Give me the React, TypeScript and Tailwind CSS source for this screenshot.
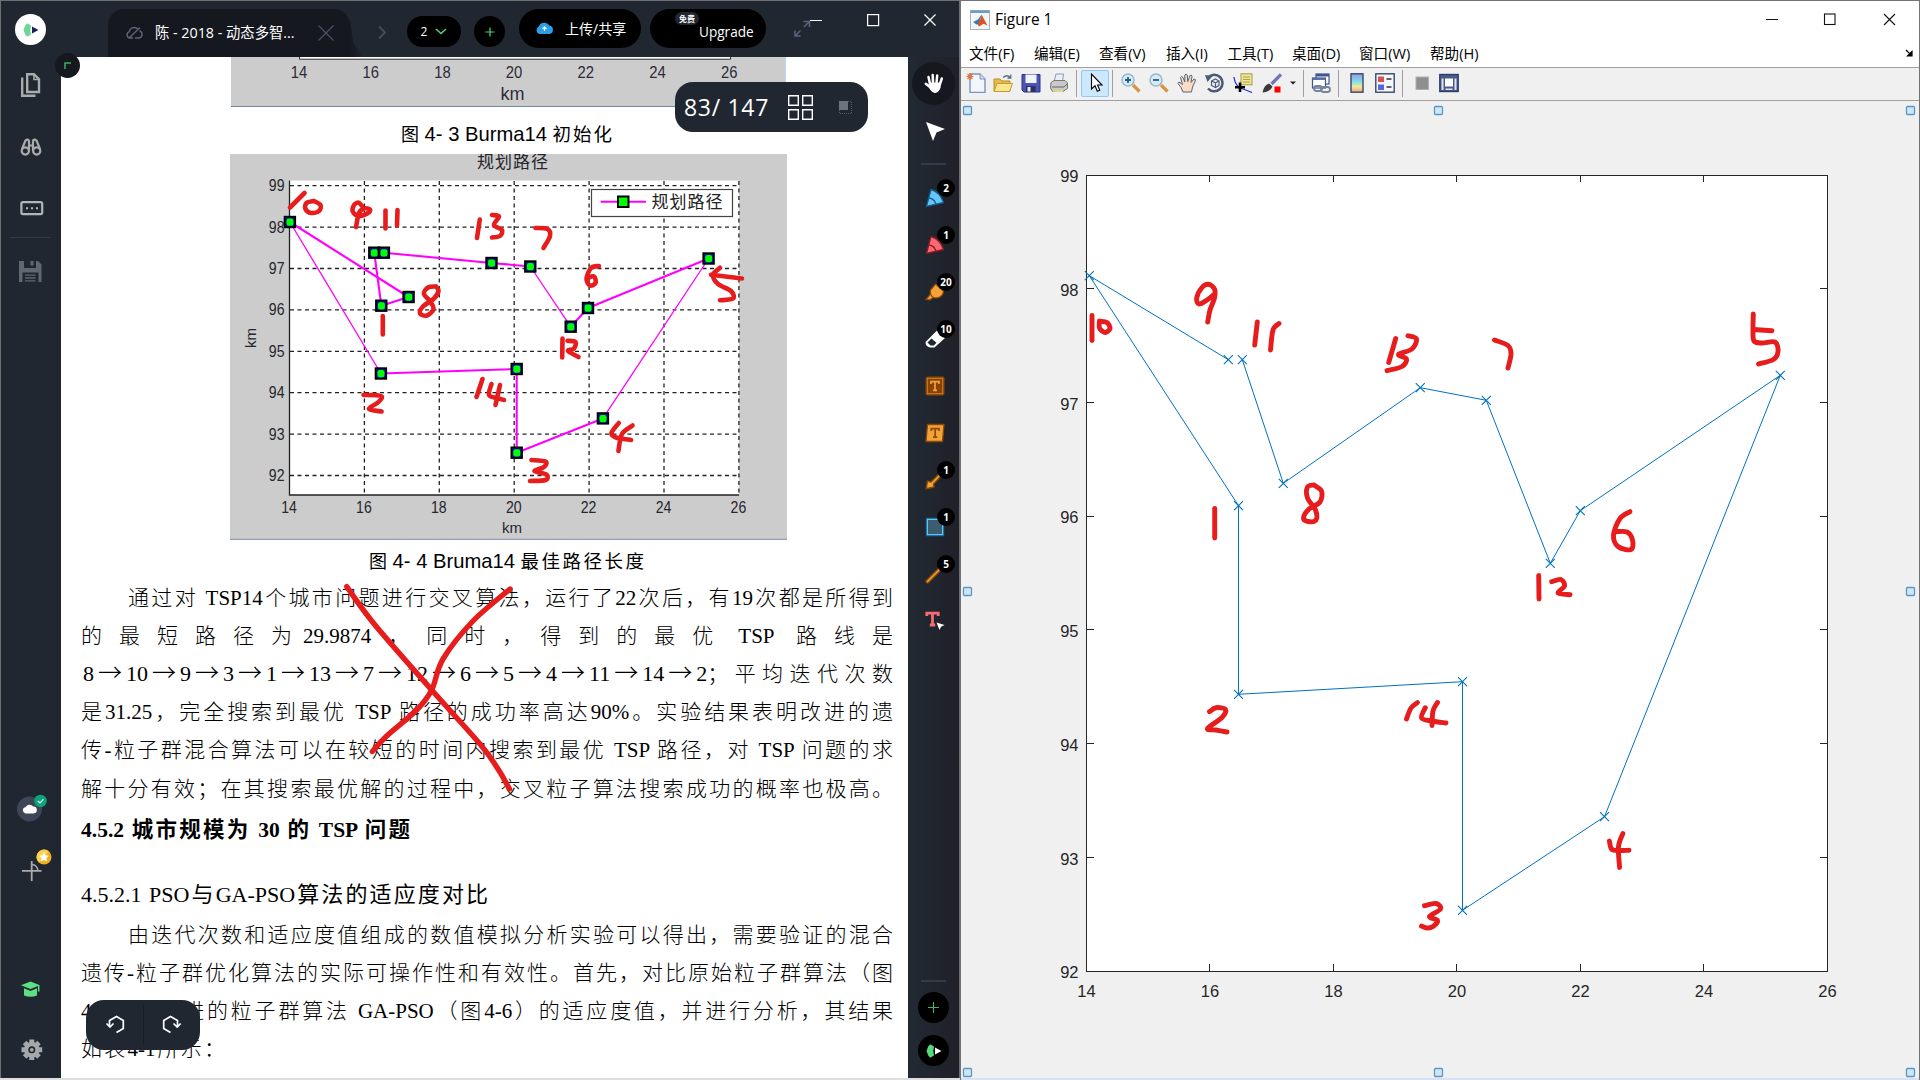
import React from "react";

const UI = "font-['Open_Sans','Noto_Sans_CJK_SC',sans-serif]";
const INK = "#e71d1d";

type P = [number, number];

/** Catmull-Rom smoothing of a pen stroke. */
function smooth(pts: P[]): string {
  if (pts.length === 2) return `M${pts[0]} L${pts[1]}`;
  let d = `M${pts[0]}`;
  for (let i = 0; i < pts.length - 1; i++) {
    const a = pts[i - 1] ?? pts[i];
    const b = pts[i];
    const c = pts[i + 1];
    const e = pts[i + 2] ?? c;
    d += ` C${b[0] + (c[0] - a[0]) / 6},${b[1] + (c[1] - a[1]) / 6} ${c[0] - (e[0] - b[0]) / 6},${c[1] - (e[1] - b[1]) / 6} ${c}`;
  }
  return d;
}

function Strokes({ list, width }: { list: P[][]; width: number }) {
  return (
    <g fill="none" stroke={INK} strokeWidth={width} strokeLinecap="round" strokeLinejoin="round">
      {list.map((s, i) => (
        <path key={i} d={smooth(s)} />
      ))}
    </g>
  );
}

const docInk: P[][] = [
  [[304.5, 193], [290, 207.5]],
  [[314, 201], [306.5, 203], [305.5, 209], [311, 213], [319, 211], [320.5, 205], [314, 201]],
  [[362, 206], [358, 202.5], [353.5, 206], [353, 212], [359, 216], [368, 213], [370, 209.5], [364, 208.5], [359, 213], [356, 227]],
  [[385.5, 210.5], [385.5, 228.5]],
  [[397.5, 210], [397, 225.5]],
  [[479.8, 219.5], [477, 238]],
  [[492, 215], [499, 216.5], [494, 225], [502, 230], [500, 236], [492, 237.5]],
  [[535.5, 228], [547.5, 229], [550, 236], [543.5, 248]],
  [[599, 266], [591, 268], [586.5, 279], [590, 285.5], [595.5, 283], [594, 276.5], [587.5, 278]],
  [[742, 278.5], [711, 274.8]],
  [[720, 267.8], [713, 275], [718, 284], [731, 291], [733, 298.5], [720, 300.3]],
  [[436, 286.5], [428, 287.5], [424, 294], [430, 301], [433.5, 309], [427, 315.5], [420, 313.5], [423, 306.5], [434, 298.5], [438.5, 291], [436, 286.5]],
  [[382.8, 316], [382.8, 334.5]],
  [[562.5, 338.5], [562.2, 357.5]],
  [[567.5, 340.8], [575.5, 342], [574, 348.5], [568, 351], [578.5, 357]],
  [[363.5, 395], [381, 396], [378.5, 402], [369, 409], [381.6, 411.5]],
  [[482.5, 379], [476.5, 397]],
  [[491.5, 384], [489, 395], [497, 398], [504, 400]],
  [[500, 385], [495.5, 405]],
  [[531.5, 460], [545.5, 461.5], [544, 467], [534.5, 471], [546.5, 474.5], [545.5, 480], [530, 481]],
  [[618.8, 423], [611.5, 433], [616, 437.5], [631, 440]],
  [[632.5, 425.5], [622, 434], [618.4, 451]],
];

const crossInk: P[][] = [
  [[346.7, 586.7], [375, 625], [431.7, 690], [480, 744], [498, 769], [509.5, 789]],
  [[510, 589], [473, 621], [443, 659], [431.7, 690], [416.7, 710], [386.7, 736], [372.3, 751.5]],
];

const figureInk: P[][] = [
  [[1092, 315.5], [1092, 340.5]],
  [[1099.5, 321], [1099.5, 328], [1105, 332.5], [1110, 328.5], [1107, 322.5], [1100.5, 321.5]],
  [[1214, 294.5], [1207, 300], [1199, 304], [1196.7, 298], [1202, 287.5], [1208.5, 284.3], [1214.5, 289], [1214.5, 298], [1210, 310], [1207.7, 322]],
  [[1257.3, 322], [1254.7, 345]],
  [[1279, 323.5], [1273, 330], [1270.5, 350]],
  [[1395.7, 338.5], [1388.7, 362.5]],
  [[1408, 335.7], [1416.5, 339], [1412, 349], [1398.5, 354.5], [1406.5, 359], [1402, 366.5], [1387, 370.7]],
  [[1494.5, 340], [1508, 345.5], [1511, 354], [1508, 368]],
  [[1753.3, 314], [1753, 330], [1754, 341], [1762, 343], [1775, 342], [1778, 351.7], [1773.3, 359.5], [1758.5, 364]],
  [[1753.3, 329.5], [1772, 330.7]],
  [[1630, 511.7], [1620, 518.5], [1613.5, 535], [1618, 546.5], [1631, 549.5], [1632.5, 540], [1627, 532], [1616, 531.7]],
  [[1538.7, 575.5], [1539, 599]],
  [[1551.7, 581.7], [1561, 579.5], [1564.5, 586], [1558, 593], [1570, 594.7]],
  [[1314, 485], [1307.5, 487], [1307.5, 498], [1315.5, 510], [1316, 520], [1308, 521.5], [1303.5, 518], [1309, 509], [1320, 502], [1321.5, 491], [1314, 485]],
  [[1214.7, 508.5], [1214.7, 538]],
  [[1209.5, 711.7], [1216, 707.7], [1225.5, 709.5], [1222, 717.5], [1207.5, 728.5], [1216, 730], [1227, 732]],
  [[1417.5, 702.5], [1411, 708], [1406.5, 719]],
  [[1425.3, 707.7], [1421.5, 718], [1432, 721], [1446, 723]],
  [[1437.5, 702.5], [1433, 711], [1432, 725.5]],
  [[1424.5, 905.7], [1436, 903.5], [1440.5, 909], [1429.4, 916.5], [1437.5, 920.5], [1433, 926.5], [1427, 928], [1421.5, 926]],
  [[1609.4, 841], [1611.5, 849], [1618, 850.5], [1629, 850.3]],
  [[1622.9, 833.5], [1618.5, 846.7], [1619.6, 867.5]],
];

function Logo({ dark }: { dark?: boolean }) {
  return (
    <svg width="16" height="14" viewBox="0 0 16 14">
      <path d="M2.2 2.5 L4.2 .3 L8 2.5 Q6.6 7 8 11.5 L4.2 13.7 L2.2 11.5 L.5 7Z" fill={dark ? "#56d97c" : "#6fd693"} />
      <path d="M9 3.5 L15.5 7 L9 10.5Z" fill={dark ? "#fff" : "#1b2350"} />
    </svg>
  );
}

function TitleBar() {
  return (
    <header className={`flex h-14 w-full shrink-0 bg-[#212730] text-white ${UI}`}>
      <div className="flex w-[107px] pl-[14px] pt-[13px]">
        <div className="flex size-[31px] items-center justify-center rounded-full bg-white">
          <Logo />
        </div>
      </div>
      <div className="flex">
        <div className="mt-2 flex h-12 w-[242px] items-center rounded-t-[16px] bg-[#16181f] pl-[18px]">
          <svg width="17" height="14" viewBox="0 0 17 14" fill="none" stroke="#5d6377" strokeWidth="1.5" strokeLinecap="round">
            <path d="M6.5 12 H4 A3.2 3.2 0 0 1 3.2 5.8 A5 5 0 0 1 11 2.4 M14 5 A3.7 3.7 0 0 1 12.5 12 H9.5 M3 12 L13.5 2" />
          </svg>
          <span className="ml-[12px] w-[141px] whitespace-nowrap text-[14.3px] leading-none">陈 - 2018 - 动态多智...</span>
          <svg className="ml-[22px]" width="16" height="16" viewBox="0 0 16 16" stroke="#4c5263" strokeWidth="1.2">
            <path d="M.5 .5 L15.5 15.5 M15.5 .5 L.5 15.5" />
          </svg>
        </div>
        <div className="mt-2 h-12 w-4 bg-linear-to-r from-[#16181f] to-[#212730] [clip-path:polygon(0_20%,0_100%,80%_100%,20%_70%)]" />
      </div>
      <svg className="ml-[11px] mt-[24px]" width="10" height="15" viewBox="0 0 10 15" fill="none" stroke="#474d5c" strokeWidth="1.8">
        <path d="M2 1.5 L8 7.5 L2 13.5" />
      </svg>
      <div className="ml-[20px] mt-[15px] flex h-[31px] w-[54px] items-center justify-center gap-2 rounded-full bg-black text-[12px]">
        2
        <svg width="12" height="7" viewBox="0 0 12 7" fill="none" stroke="#4fd27c" strokeWidth="1.6">
          <path d="M1 1 L6 5.5 L11 1" />
        </svg>
      </div>
      <div className="ml-[13px] mt-[15px] flex size-[31px] items-center justify-center rounded-full bg-black">
        <svg width="10" height="10" viewBox="0 0 10 10" stroke="#4fd27c" strokeWidth="1.2">
          <path d="M5 .5 V9.5 M.5 5 H9.5" />
        </svg>
      </div>
      <div className="ml-[14px] mt-2 flex h-[39px] w-[122px] items-center rounded-full bg-black pl-4">
        <svg width="19" height="13" viewBox="0 0 19 13">
          <path d="M4.5 12 A4 4 0 0 1 3.8 4.5 A6 6 0 0 1 14.5 3.6 A4.3 4.3 0 0 1 14.6 12Z" fill="#2d9fe8" />
          <path d="M9.5 9 V5 M7.5 6.8 L9.5 4.8 L11.5 6.8" stroke="#fff" strokeWidth="1.2" fill="none" />
        </svg>
        <span className="ml-[11px] whitespace-nowrap text-[14px]">上传/共享</span>
      </div>
      <div className="relative ml-[9px] mt-2 h-[39px] w-[116px] rounded-full bg-black">
        <span className="absolute left-[25px] top-[3px] flex h-[13px] w-6 items-center justify-center whitespace-nowrap rounded-full bg-[#212730] text-[8px] font-bold">
          免费
        </span>
        <span className="absolute left-[49px] top-[13px] text-[13.6px] leading-5">Upgrade</span>
      </div>
      <svg className="ml-[28px] mt-[13px]" width="142" height="26" viewBox="794 14 142 26" fill="none">
        <g stroke="#5d6278" strokeWidth="1.5">
          <path d="M804 27 L809.5 21.5 M803.5 21.5 H809.5 V27 M800.5 30.5 L795 36 M795 30.5 V36 H800.5" />
        </g>
        <g stroke="#fff" strokeWidth="1.2">
          <path d="M810 20.5 H822 M924.5 14.5 L935.5 25.5 M935.5 14.5 L924.5 25.5" />
          <rect x="867.6" y="14.6" width="11" height="11" />
        </g>
      </svg>
    </header>
  );
}

function LeftRail() {
  return (
    <aside className="relative flex w-[60px] shrink-0 flex-col bg-[#212730]">
      <svg width="60" height="1021" viewBox="1 57 60 1021" fill="none">
        <g stroke="#a9abae" strokeWidth="2.4">
          <path d="M27.2 74.2 H34 L39 79.2 V92 H27.2Z" />
          <path d="M34 74.5 V79.5 H39" strokeWidth="1.6" />
          <path d="M22.2 77.5 V95.8 H35.5" />
        </g>
        <g stroke="#a9abae" strokeWidth="2.2">
          <circle cx="25.3" cy="151" r="3.6" />
          <circle cx="36.7" cy="151" r="3.6" />
          <path d="M22 149 L25.5 140.5 Q28 138.5 29 141 V151 M40 149 L36.5 140.5 Q34 138.5 33 141 V151 M29 145.5 H33" />
        </g>
        <rect x="21.4" y="202.2" width="20.8" height="12" rx="1.6" stroke="#b3b5b8" strokeWidth="2.2" />
        <path d="M26 208.3 h2 M31 208.3 h2 M36 208.3 h2" stroke="#b3b5b8" strokeWidth="2" />
        <path d="M11 237.5 H51" stroke="#363c47" />
        <path d="M19 261 H24 V268 H36 V261 H38 L41.5 264.5 V282 H38.5 V272.5 H22.5 V282 H19Z M30.5 261 h3 v4.5 h-3z" fill="#62676f" />
        <path d="M25 275.2 H35.5 M25 278 H35.5 M25 280.8 H35.5" stroke="#62676f" strokeWidth="1.3" />
        <circle cx="29.5" cy="809" r="12.5" fill="#3f4557" />
        <path d="M25.5 813.5 A3.2 3.2 0 0 1 25.5 807.2 A4.6 4.6 0 0 1 33.2 806.5 A3.4 3.4 0 0 1 33.5 813.5Z" fill="#fff" />
        <circle cx="40.5" cy="801" r="6.2" fill="#0aa679" />
        <path d="M37.8 801 L40 803 L43.4 799.4" stroke="#fff" strokeWidth="1.1" />
        <path d="M31.7 861 V881 M22 870.8 H41.5" stroke="#a9abae" strokeWidth="1.8" />
        <path d="M32 864.5 Q37 865 38 870.5" stroke="#a9abae" strokeWidth="1.5" />
        <circle cx="44" cy="857" r="7.5" fill="#f0b01e" />
        <path d="M37.5 853.5 A7.5 7.5 0 0 1 49 851.5 L39 862.5 A7.5 7.5 0 0 1 37.5 853.5Z" fill="#f9d24c" />
        <path d="M44 852 l1.5 3.2 3.4.5 -2.5 2.4 .6 3.5 -3-1.7 -3 1.7 .6-3.5 -2.5-2.4 3.4-.5z" fill="#fff" />
        <path d="M30.5 981.5 L40 985.2 L30.5 989 L21 985.2Z" fill="#5de085" />
        <path d="M24 988.3 L30.5 991 L37 988.3 V995.5 Q30.5 998 24 995.5Z" fill="#5de085" />
        <path d="M38.7 985.5 V991.5" stroke="#5de085" strokeWidth="1.5" />
        <g stroke="#a5a8ab" strokeWidth="5">
          <path d="M31.8 1039.5 V1060 M21.5 1049.8 H42.2 M24.6 1042.6 L39 1057 M39 1042.6 L24.6 1057" />
        </g>
        <circle cx="31.8" cy="1049.8" r="7.8" fill="#a5a8ab" />
        <circle cx="31.8" cy="1049.8" r="2.7" stroke="#212730" strokeWidth="1.6" />
      </svg>
    </aside>
  );
}

const brown = "#8a4a06";
const amber = "#f5a13a";

function Crayon({ fill, edge }: { fill: string; edge: string }) {
  return (
    <svg width="20" height="20" viewBox="0 0 20 20" fill={fill} stroke={edge} strokeWidth="1.3" strokeLinejoin="round">
      <path d="M1.5 18.3 L6 1.5 Q15 4 18.5 14.5 Z" />
      <path d="M3.8 10 Q9.5 10.5 11 16.4" fill="none" />
    </svg>
  );
}

const tools: { badge?: string; icon: React.ReactNode }[] = [
  { badge: "2", icon: <Crayon fill="#66c5fb" edge="#12608f" /> },
  { badge: "1", icon: <Crayon fill="#fa6870" edge="#8f1c24" /> },
  {
    badge: "20",
    icon: (
      <svg width="20" height="20" viewBox="0 0 20 20" fill={amber} stroke={brown} strokeWidth="1.2">
        <path d="M1 17.5 L6 11.5 L9 15 L5 17.8Z" />
        <path d="M5.5 8 L10.5 2 L18.5 9 Q18 15.5 11 16 L8 15.5 Q4.5 12 5.5 8Z" />
      </svg>
    ),
  },
  {
    badge: "10",
    icon: (
      <svg width="20" height="20" viewBox="0 0 20 20">
        <path d="M.5 13 L12 1.5 L20 9 L9.5 18.5 H5 Q.5 17.5 .5 13Z" fill="#fff" />
        <path d="M2.5 13.5 L6.5 9.5 L11.5 13.8 L8.8 16.6 H5.5Z" fill="#212730" />
      </svg>
    ),
  },
  {
    icon: (
      <svg width="20" height="20" viewBox="0 0 20 20">
        <rect x=".5" y=".5" width="19" height="19" rx="2" fill={brown} />
        <rect x="2.4" y="2.4" width="15.2" height="15.2" fill="#8a4200" stroke="#c97a24" strokeWidth="1" />
        <path d="M6 8 V5.6 H14 V8 M10 5.6 V14.4 M8 14.4 H12" fill="none" stroke={amber} strokeWidth="1.7" />
      </svg>
    ),
  },
  {
    icon: (
      <svg width="20" height="20" viewBox="0 0 20 20">
        <path d="M2.5 1.5 H19 L17.5 18.5 H1Z" fill={amber} stroke={brown} strokeWidth="1.3" strokeLinejoin="round" />
        <path d="M6.3 8 V5.6 H14 V8 M10.2 5.6 V14.2 M8 14.2 H12.2" fill="none" stroke={brown} strokeWidth="1.7" />
      </svg>
    ),
  },
  {
    badge: "1",
    icon: (
      <svg width="20" height="20" viewBox="0 0 20 20" fill={amber} stroke={brown} strokeWidth="1.4" strokeLinejoin="round">
        <path d="M1.2 18.8 L2.5 11 L6 12 L16 2 L18 4 L8.5 14 L9 17Z" />
      </svg>
    ),
  },
  {
    badge: "1",
    icon: (
      <svg width="20" height="20" viewBox="0 0 20 20">
        <rect x=".8" y=".8" width="18.4" height="18.4" rx="1" fill="#12699c" />
        <rect x="2.4" y="2.4" width="15.2" height="15.2" fill="#3b5d6f" stroke="#6fcbfa" strokeWidth="1" />
      </svg>
    ),
  },
  {
    badge: "5",
    icon: (
      <svg width="20" height="20" viewBox="0 0 20 20" strokeLinecap="round">
        <path d="M2.5 17.5 L17 3" stroke={brown} strokeWidth="4.2" />
        <path d="M2.5 17.5 L17 3" stroke={amber} strokeWidth="1.5" />
      </svg>
    ),
  },
  {
    icon: (
      <svg width="20" height="20" viewBox="0 0 20 20">
        <path d="M1.8 5 V2.2 H13.2 V5 M7.5 2.2 V14 M4.8 14 H10.2" fill="none" stroke="#fa6b71" strokeWidth="2.8" />
        <path d="M11.5 11.5 L19.5 14 L16 15.8 L14.5 19Z" fill="#fff" />
      </svg>
    ),
  },
];

function RightRail() {
  return (
    <aside className={`flex w-[51px] shrink-0 flex-col items-center bg-linear-to-r from-[#212a34] to-[#202028] text-white ${UI}`}>
      <div className="mt-[5px] flex size-[43px] items-center justify-center rounded-full bg-[#15181f]">
        <svg width="20" height="21" viewBox="0 0 20 21" fill="none" stroke="#fff" strokeWidth="2.5" strokeLinecap="round">
          <path d="M6 11 L4.5 4 M9 10 L8.7 2 M12.5 10 L13.2 2.4 M16 11 L17.8 5.5 M6 14 L1.8 10.8" />
          <path d="M6 10 L16.5 10 L16 15 Q14.5 19.5 11 19.5 Q7.5 19.5 5 14Z" fill="#fff" strokeWidth="1" />
        </svg>
      </div>
      <svg className="ml-[2px] mt-4" width="20" height="20" viewBox="0 0 20 20">
        <path d="M1 1 L20 8 L11.5 11.5 L8 20Z" fill="#fff" />
      </svg>
      <div className="mb-[9px] mt-[22px] h-0.5 w-[25px] bg-[#343a4a]" />
      {tools.map((t, i) => (
        <div key={i} className="relative flex h-[47px] w-full items-center justify-center pl-[2px] [&>svg]:shrink-0">
          {t.icon}
          {t.badge && (
            <span className="absolute left-[29px] top-[5px] flex size-[18px] items-center justify-center rounded-full bg-black text-[10px] font-bold">
              {t.badge}
            </span>
          )}
        </div>
      ))}
      <div className="mt-auto h-0.5 w-[25px] bg-[#343a4a]" />
      <div className="mt-[10px] flex size-[31px] items-center justify-center rounded-full bg-black">
        <svg width="11" height="11" viewBox="0 0 11 11" stroke="#3fb568" strokeWidth="1.1">
          <path d="M5.5 0 V11 M0 5.5 H11" />
        </svg>
      </div>
      <div className="mb-3 mt-3 flex size-[31px] items-center justify-center rounded-full bg-black">
        <Logo dark />
      </div>
    </aside>
  );
}

const tour: P[] = [
  [289.9, 222], [408.6, 297], [381.3, 305.7], [374.3, 252.7], [383.9, 252.7], [491.5, 263], [530.3, 266.5],
  [570.7, 326.7], [588, 308], [708.6, 258.5], [602.9, 418.4], [516.7, 452.7], [516.7, 369], [380.9, 373.5],
];

/** Legs of the tour, by start index, that are drawn as hairlines. */
const thinLegs = [6, 9, 13];

function Marker({ p }: { p: P }) {
  return (
    <g>
      <rect x={p[0] - 5.3} y={p[1] - 5.3} width="10.6" height="10.6" fill="#0a12a0" stroke="#000" strokeWidth="1.8" />
      <rect x={p[0] - 3.4} y={p[1] - 3.4} width="7" height="7.2" rx="2.2" fill="#0f0" />
    </g>
  );
}

function TopChart() {
  const ticks = [14, 16, 18, 20, 22, 24, 26];
  return (
    <svg className="ml-[170px] shrink-0" width="556" height="50" viewBox="231 57 556 50" fontFamily="Liberation Sans, Arial, sans-serif">
      <rect x="231" y="57" width="553" height="49" fill="#ccc" />
      <rect x="299.5" y="57" width="431" height="2" fill="#fff" />
      <path d="M299.5 57 V59.2 H730.5 V57" stroke="#333" fill="none" />
      <path d="M231 106.5 H785" stroke="#74889b" strokeWidth="1.2" />
      <path d="M785 57 V106" stroke="#a9c3dd" strokeWidth="1.5" />
      <g fill="#2c2c38" textAnchor="middle">
        {ticks.map((t, i) => (
          <text key={t} transform={`translate(${299 + i * 71.7} 77.5) scale(.9 1)`} fontSize="16.5">{t}</text>
        ))}
        <text x="512.5" y="99.5" fontSize="18">km</text>
      </g>
    </svg>
  );
}

function PathChart() {
  const xs = [14, 16, 18, 20, 22, 24, 26];
  const ys = [99, 98, 97, 96, 95, 94, 93, 92];
  return (
    <svg className="ml-[169px] shrink-0" width="557" height="386" viewBox="230 154 557 386" fontFamily="Liberation Sans, Noto Sans CJK SC, sans-serif">
      <rect x="230" y="154" width="557" height="386" fill="#ccc" />
      <rect x="289.5" y="180.5" width="449.5" height="314.5" fill="#fff" />
      <g stroke="#222" strokeWidth="1.3" strokeDasharray="4 3.5">
        {xs.slice(1).map((t, i) => (
          <path key={t} d={`M${364.4 + i * 74.9} 181 V495`} />
        ))}
        {ys.map((t, i) => (
          <path key={t} d={`M290 ${185.7 + i * 41.4} H739`} />
        ))}
      </g>
      <path d="M289.5 180.5 V495 H739" fill="none" stroke="#222" strokeWidth="1.3" />
      <g fill="#26262c">
        {xs.map((t, i) => (
          <text key={t} transform={`translate(${289 + i * 74.9} 513.3) scale(.88 1)`} textAnchor="middle" fontSize="16">{t}</text>
        ))}
        {ys.map((t, i) => (
          <text key={t} transform={`translate(284.5 ${191.2 + i * 41.4}) scale(.88 1)`} textAnchor="end" fontSize="16">{t}</text>
        ))}
        <text x="512" y="533" textAnchor="middle" fontSize="15">km</text>
        <text transform="translate(255.5 338) rotate(-90)" textAnchor="middle" fontSize="15">km</text>
        <text x="477" y="168" fontSize="17" letterSpacing="1">规划路径</text>
      </g>
      {tour.map((p, i) => (
        <path key={i} d={`M${p} L${tour[(i + 1) % tour.length]}`} stroke="#f0f" strokeWidth={thinLegs.includes(i) ? 1.3 : 2.1} />
      ))}
      {tour.map((p, i) => (
        <Marker key={i} p={p} />
      ))}
      <rect x="591.5" y="189.5" width="141" height="27" fill="#fff" stroke="#444" strokeWidth="1.2" />
      <path d="M600.6 201.7 H646" stroke="#f0f" strokeWidth="2" />
      <rect x="618" y="196.5" width="10.5" height="10.5" fill="#0f0" stroke="#000" strokeWidth="2" />
      <text x="651.5" y="208.2" fontSize="17" letterSpacing="1" fill="#222">规划路径</text>
      <path d="M230 539.4 H787" stroke="#8fa0b0" strokeWidth="1.2" />
    </svg>
  );
}

const route = [8, 10, 9, 3, 1, 13, 7, 12, 6, 5, 4, 11, 14, 2];

function Line({ indent, children }: { indent?: boolean; children: React.ReactNode }) {
  return (
    <p className={`h-[38.2px] whitespace-nowrap leading-[38.2px] [text-align-last:justify] ${indent ? "pl-[47px]" : ""}`}>{children}</p>
  );
}

function DocumentPage() {
  return (
    <main className="relative flex w-[847px] shrink-0 flex-col overflow-hidden bg-white text-black">
      <TopChart />
      <p className="ml-[340px] h-[47px] shrink-0 whitespace-nowrap pt-[6px] font-['Liberation_Sans','Noto_Sans_CJK_SC',sans-serif] text-[20.2px] leading-[42px]">
        <span className="text-[18px]">图</span> 4- 3 Burma14 <span className="text-[18.5px] tracking-[2px]">初始化</span>
      </p>
      <PathChart />
      <p className="ml-[308px] h-[38.6px] shrink-0 whitespace-nowrap pt-[3px] font-['Liberation_Sans','Noto_Sans_CJK_SC',sans-serif] text-[20.2px] leading-[36px]">
        <span className="text-[18px]">图</span> 4- 4 Bruma14 <span className="text-[18.5px] tracking-[2.5px]">最佳路径长度</span>
      </p>
      <article className="ml-[20px] w-[812px] font-['Liberation_Serif','Noto_Sans_CJK_SC',serif] text-[21px] font-light">
        <Line indent>通过对 TSP14个城市问题进行交叉算法，运行了22次后，有19次都是所得到</Line>
        <Line>
          的最短路径为<span className="-ml-[6px]">29.9874</span>，同时，得到的最优<span className="ml-[8px]">TSP</span> 路线是
        </Line>
        <Line>
          <span className="pl-[2px] text-[22px]">
            {route.map((n, i) => (
              <React.Fragment key={i}>
                {n}
                {i < route.length - 1 && (
                  <span className="mx-[4px] font-['Noto_Sans_CJK_SC'] text-[24px] leading-none">→</span>
                )}
              </React.Fragment>
            ))}
          </span>
          ；平均迭代次数
        </Line>
        <Line>是31.25，完全搜索到最优 TSP 路径的成功率高达90%。实验结果表明改进的遗</Line>
        <Line>传-粒子群混合算法可以在较短的时间内搜索到最优 TSP 路径，对 TSP 问题的求</Line>
        <Line>解十分有效；在其搜索最优解的过程中，交叉粒子算法搜索成功的概率也极高。</Line>
        <h2 className="h-[46px] w-[329px] whitespace-nowrap text-[21.5px] font-bold leading-[45px] [text-align-last:justify]">
          4.5.2 城市规模为 30 的 TSP 问题
        </h2>
        <h3 className="mt-[22px] h-[40px] w-[407px] whitespace-nowrap text-[22px] font-normal leading-[38px] [text-align-last:justify]">
          4.5.2.1 PSO与GA-PSO算法的适应度对比
        </h3>
        <Line indent>由迭代次数和适应度值组成的数值模拟分析实验可以得出，需要验证的混合</Line>
        <Line>遗传-粒子群优化算法的实际可操作性和有效性。首先，对比原始粒子群算法（图</Line>
        <Line>4-5）和改进的粒子群算法 GA-PSO（图4-6）的适应度值，并进行分析，其结果</Line>
        <p className="h-[38.2px] w-[144px] whitespace-nowrap leading-[38.2px] [text-align-last:justify]">如表4-1所示：</p>
      </article>

      <svg className="pointer-events-none absolute inset-0" width="847" height="1021" viewBox="61 57 847 1021">
        <Strokes list={docInk} width={4.6} />
        <Strokes list={crossInk} width={5.4} />
      </svg>

      <div className={`absolute left-[614px] top-[25px] flex h-[50px] w-[193px] items-center rounded-[18px] bg-[#212730] pl-[9px] text-white ${UI}`}>
        <span className="w-[104px] whitespace-nowrap text-[23px] leading-none tracking-[0.7px]">83/ 147</span>
        <svg width="25" height="25" viewBox="0 0 25 25" fill="none" stroke="#fff" strokeWidth="1.4">
          <path d="M.7 .7 h9.6 v9.6 h-9.6z M14.7 .7 h9.6 v9.6 h-9.6z M.7 14.7 h9.6 v9.6 h-9.6z M14.7 14.7 h9.6 v9.6 h-9.6z" />
        </svg>
        <svg className="ml-[26px]" width="13" height="13" viewBox="0 0 13 13">
          <path d="M9 .5 H12.5 V12.5 H.5 V9" fill="none" stroke="#565c68" strokeDasharray="1 1" />
          <rect width="9" height="9" fill="#6d727c" />
        </svg>
      </div>

      <div className="absolute left-[25px] top-[943px] flex h-[50px] w-[114px] items-center rounded-[18px] bg-[#212730]">
        <svg width="114" height="50" viewBox="86 1000 114 50" fill="none" stroke="#fff" strokeWidth="1.7">
          <path d="M143.5 1005 V1045" stroke="#191c25" strokeWidth="1" />
          <path d="M109.5 1026 V1020.5 L116.5 1016.5 L123.3 1020.5 V1028.5 L116.5 1032.5 M106.5 1023.5 L110 1027 L113.5 1023.5" />
          <path d="M177.5 1026 V1020.5 L170.5 1016.5 L163.7 1020.5 V1028.5 L170.5 1032.5 M173.5 1023.5 L177.2 1027 L180.7 1023.5" />
        </svg>
      </div>
    </main>
  );
}

const plotPath: P[] = [
  [1228.3, 359.7], [1089.3, 275.7], [1238.5, 505.7], [1238.5, 694.3], [1462.5, 681.7], [1462.5, 910.3], [1604.5, 816.7],
  [1780.3, 375.3], [1580.3, 510.7], [1550.3, 563.3], [1486.3, 400.3], [1420.3, 387.7], [1283.3, 483.3], [1242.3, 359.7],
];

function Figure() {
  const xs = [14, 16, 18, 20, 22, 24, 26];
  const ys = [99, 98, 97, 96, 95, 94, 93, 92];
  const handles: P[] = [
    [967.5, 110.5], [1438.5, 110.5], [1910.5, 110.5], [967.5, 591.5], [1910.5, 591.5], [967.5, 1072.5], [1438.5, 1072.5], [1910.5, 1072.5],
  ];
  return (
    <svg className="shrink-0" width="958" height="977" viewBox="961 101 958 977" fontFamily="Liberation Sans, Arial, sans-serif">
      <rect x="961" y="101" width="958" height="977" fill="#f0f0f0" />
      <rect x="1086.5" y="175.5" width="741" height="796" fill="#fff" stroke="#262626" />
      <g stroke="#262626">
        {xs.slice(1, 6).map((t, i) => (
          <path key={t} d={`M${Math.round(1210 + i * 123.5) - 0.5} 175 v7 M${Math.round(1210 + i * 123.5) - 0.5} 971 v-7`} />
        ))}
        {ys.slice(1, 7).map((t, i) => (
          <path key={t} d={`M1087 ${Math.round(289 + i * 113.8) - 0.5} h7 M1827 ${Math.round(289 + i * 113.8) - 0.5} h-7`} />
        ))}
      </g>
      <g fill="#262626" fontSize="16.5">
        {xs.map((t, i) => (
          <text key={t} x={1086.5 + i * 123.5} y="997" textAnchor="middle">{t}</text>
        ))}
        {ys.map((t, i) => (
          <text key={t} x="1078.5" y={182 + i * 113.75} textAnchor="end">{t}</text>
        ))}
      </g>
      <path d={`M${plotPath.join(" L")}`} fill="none" stroke="#0072bd" strokeWidth="1" />
      <path d={plotPath.map(([x, y]) => `M${x - 4.5} ${y - 4.5} l9 9 m0 -9 l-9 9`).join(" ")} stroke="#0072bd" strokeWidth="1.1" />
      {handles.map(([x, y], i) => (
        <rect key={i} x={x - 4} y={y - 4} width="8" height="8" rx="1" fill="#cfe6f7" stroke="#5a97c6" strokeWidth="1.3" />
      ))}
      <Strokes list={figureInk} width={4.9} />
    </svg>
  );
}

const Ico = ({ children }: { children: React.ReactNode }) => (
  <svg className="shrink-0" width="20" height="20" viewBox="0 0 20 20" fill="none">
    {children}
  </svg>
);

const Sep = () => <div className="h-[27px] w-px bg-[#a0a0a0]" />;

function Lens({ plus }: { plus?: boolean }) {
  return (
    <Ico>
      <path d="M12 12 L18.5 18.5" stroke="#d99440" strokeWidth="3.2" />
      <circle cx="7" cy="7" r="6" fill="#d3ecf7" stroke="#9db6c8" strokeWidth="1.5" />
      <path d={plus ? "M4 7 H10 M7 4 V10" : "M4 7 H10"} stroke="#2a5a86" strokeWidth="1.8" />
    </Ico>
  );
}

const toolbar: { w: string; icon: React.ReactNode }[] = [
  {
    w: "w-[30px]",
    icon: (
      <Ico>
        <path d="M4 1 H14 L19 6 V19.5 H4Z" fill="#f3f7fd" stroke="#7b93bd" strokeWidth="1.4" />
        <path d="M14 1 V6 H19" stroke="#7b93bd" fill="#cfdcf0" />
        <path d="M4 0 V7 M.5 3.5 H7.5 M1.5 1 L6.5 6 M6.5 1 L1.5 6" stroke="#e2703a" strokeWidth="1.1" />
      </Ico>
    ),
  },
  {
    w: "w-[24px]",
    icon: (
      <Ico>
        <path d="M1 6 H7 L9 8 H17 V18 H1Z" fill="#e6bb4b" stroke="#b98d22" />
        <path d="M4 10.5 H19.5 L16.5 18.5 H1Z" fill="#fbe690" stroke="#c59a2e" />
        <path d="M10 4.5 Q14 1 17.5 4.5 M17.8 1.5 V5 H14.5" stroke="#56718e" strokeWidth="1.3" />
      </Ico>
    ),
  },
  {
    w: "w-[32px]",
    icon: (
      <Ico>
        <path d="M1 1.5 H19 V19 H3 L1 17Z" fill="#4a55b5" stroke="#2c347e" />
        <rect x="4.5" y="1.5" width="11" height="8.5" fill="#f0f4fb" />
        <rect x="5" y="13" width="9.5" height="6" fill="#2b3062" />
        <rect x="6.5" y="14" width="3" height="4.5" fill="#e7ebf5" />
      </Ico>
    ),
  },
  {
    w: "w-[24px]",
    icon: (
      <Ico>
        <path d="M5 9 L7 1 H14.5 L13.5 9Z" fill="#e8f1fb" stroke="#8b9bb0" />
        <path d="M2 9.5 L5 7.5 H16 L18.5 10 V15.5 L14 18.5 H3.5 L1.5 15Z" fill="#c9c9c9" stroke="#777" />
        <path d="M3 14 H15 L18 11" stroke="#666" />
        <path d="M4 18 L14 18.5" stroke="#e8dc7a" strokeWidth="1.5" />
      </Ico>
    ),
  },
  { w: "w-[10px]", icon: <Sep /> },
  {
    w: "w-[28px]",
    icon: (
      <div className="flex h-[27px] w-[28px] shrink-0 items-center justify-center rounded-[2px] border border-[#90c8f6] bg-[#cce8ff]">
        <Ico>
          <path d="M6.5 1 V16 L10 12.8 L12.3 18.3 L14.8 17.2 L12.5 12 H17Z" fill="#fff" stroke="#000" strokeWidth="1.1" />
        </Ico>
      </div>
    ),
  },
  { w: "w-[6px]", icon: <Sep /> },
  { w: "w-[32px]", icon: <Lens plus /> },
  { w: "w-[24px]", icon: <Lens /> },
  {
    w: "w-[32px]",
    icon: (
      <Ico>
        <path
          d="M6 19 Q4.5 14 1 10.5 Q1 8.5 3 9.5 L5.5 11.5 L3.5 4.5 Q4.5 2.5 6 4.5 L7.8 9 L7.8 2 Q9 0 10.3 2 L10.8 8.5 L13 2.5 Q14.5 1.5 15 3.3 L14 9.5 L17 6 Q19 6 18.3 8 L15.5 14 L14.5 19Z"
          fill="#fbdcc0"
          stroke="#56627e"
          strokeWidth="1"
        />
      </Ico>
    ),
  },
  {
    w: "w-[24px]",
    icon: (
      <Ico>
        <path d="M3 4.5 A8.3 8.3 0 1 1 3 15.5" stroke="#4d5a76" strokeWidth="2.6" />
        <path d="M0 2 L7.5 3 L2.5 9Z" fill="#4d5a76" />
        <path d="M6.5 8 L10.5 6 L14 8 V12.5 L10.5 14.5 L6.5 12.5Z M6.5 8 L10.5 9.8 L14 8 M10.5 9.8 V14.5" stroke="#4d5a76" strokeWidth="1.2" fill="#e8eef7" />
      </Ico>
    ),
  },
  {
    w: "w-[32px]",
    icon: (
      <Ico>
        <path d="M1 4 Q2 12 7 15 Q13 17 19 19.5" stroke="#2a2af0" strokeWidth="1.3" />
        <rect x="8" y=".8" width="11" height="11" fill="#eee79b" stroke="#a39a3e" />
        <path d="M10 4 H17 M10 6.5 H17 M10 9 H17" stroke="#a39a3e" strokeWidth=".9" />
        <path d="M7 9.5 V19 M2 14.3 H12" stroke="#000" strokeWidth="2.6" />
      </Ico>
    ),
  },
  {
    w: "w-[26px]",
    icon: (
      <Ico>
        <path d="M19 1.5 L9.5 11" stroke="#7077b8" strokeWidth="3.2" />
        <path d="M.5 19.5 Q2 12 7 10.5 L10.5 13.5 Q8 18.5 .5 19.5Z" fill="#3a3a3a" />
        <rect x="12.5" y="13.5" width="6" height="6" fill="#f00" />
      </Ico>
    ),
  },
  {
    w: "w-[16px]",
    icon: (
      <svg width="6" height="4" viewBox="0 0 6 4">
        <path d="M0 .5 H6 L3 3.5Z" fill="#222" />
      </svg>
    ),
  },
  { w: "w-[4px]", icon: <Sep /> },
  {
    w: "w-[32px]",
    icon: (
      <Ico>
        <rect x="5" y="1" width="13" height="10" fill="#fff" stroke="#3e548c" strokeWidth="1.2" />
        <rect x="5" y="1" width="13" height="2.5" fill="#3e548c" />
        <rect x="1.5" y="5" width="13" height="10" fill="#fff" stroke="#3e548c" strokeWidth="1.2" />
        <rect x="1.5" y="5" width="13" height="2" fill="#5870a8" />
        <rect x="3" y="13" width="8" height="5" rx="2.5" stroke="#75839a" strokeWidth="1.8" />
        <rect x="10" y="14" width="9" height="5" rx="2.5" stroke="#75839a" strokeWidth="1.8" />
      </Ico>
    ),
  },
  { w: "w-[2px]", icon: <Sep /> },
  {
    w: "w-[36px]",
    icon: (
      <Ico>
        <defs>
          <linearGradient id="cbar" x1="0" y1="0" x2="0" y2="1">
            <stop offset="0" stopColor="#9a9ae8" />
            <stop offset=".4" stopColor="#7edbe8" />
            <stop offset=".7" stopColor="#eeea9a" />
            <stop offset="1" stopColor="#f0a080" />
          </linearGradient>
        </defs>
        <rect x="4" y=".8" width="12" height="18.4" fill="url(#cbar)" stroke="#39476e" strokeWidth="1.4" />
      </Ico>
    ),
  },
  {
    w: "w-[20px]",
    icon: (
      <Ico>
        <rect x=".8" y=".8" width="18.4" height="18.4" fill="#f4f7fc" stroke="#39476e" strokeWidth="1.4" />
        <rect x="3" y="3.5" width="6" height="5.5" fill="#dc4f4f" />
        <rect x="3" y="11.5" width="6" height="5.5" fill="#5a66d8" />
        <path d="M11.5 6 H16.5 M11.5 14 H16.5" stroke="#333" strokeWidth="1.4" />
      </Ico>
    ),
  },
  { w: "w-[14px]", icon: <Sep /> },
  {
    w: "w-[26px]",
    icon: (
      <Ico>
        <rect x="4" y="4" width="12.5" height="12.5" fill="#8f8f8f" stroke="#b0b0b0" />
      </Ico>
    ),
  },
  {
    w: "w-[28px]",
    icon: (
      <Ico>
        <rect x=".8" y="1.5" width="18.4" height="17" fill="#4a5b85" stroke="#2f3f6b" strokeWidth="1.4" />
        <path d="M2.5 5.5 H4.5 V17 H2.5Z M15.5 5.5 H17.5 V17 H15.5Z M6.5 15.5 H13.5 V17 H6.5Z" fill="#dfe5f0" />
        <rect x="6" y="5.5" width="8" height="8" fill="#fff" />
      </Ico>
    ),
  },
];

const menus: { w: string; label: string }[] = [
  { w: "w-[65px]", label: "文件(F)" },
  { w: "w-[65px]", label: "编辑(E)" },
  { w: "w-[67px]", label: "查看(V)" },
  { w: "w-[61.5px]", label: "插入(I)" },
  { w: "w-[64.5px]", label: "工具(T)" },
  { w: "w-[67px]", label: "桌面(D)" },
  { w: "w-[71px]", label: "窗口(W)" },
  { w: "w-[60px]", label: "帮助(H)" },
];

function MatlabWindow() {
  return (
    <section className={`flex h-[1080px] w-[960px] flex-col border-l border-r border-t border-[#737373] bg-white text-black ${UI}`}>
      <div className="flex h-[37px] shrink-0 items-center pl-[9px]">
        <svg width="20" height="20" viewBox="0 0 20 20">
          <rect x=".5" y=".5" width="19" height="19" fill="#f3f5f7" stroke="#a9b3bf" />
          <rect x=".5" y=".5" width="19" height="2.5" fill="#6b9cc4" />
          <path d="M3 12 L8 9.5 L11.5 4.5 L9 14 L6.5 14.5Z" fill="#3a78b5" />
          <path d="M11.5 4.5 L17.5 15.5 L13.5 13.8 L9 16.5 L7.5 14.5Q10.5 11 11.5 4.5Z" fill="#d9541e" />
        </svg>
        <span className="ml-[5px] text-[15.4px] leading-none">Figure 1</span>
        <svg className="ml-auto mr-[23px]" width="130" height="13" viewBox="0 0 130 13" fill="none" stroke="#111" strokeWidth="1.1">
          <path d="M0 6.5 H12 M118 1 L129 12 M129 1 L118 12" />
          <rect x="58.5" y="1" width="10.5" height="10.5" />
        </svg>
      </div>
      <nav className="flex h-[29px] shrink-0 items-center pl-2 pt-px text-[14.6px]">
        {menus.map((m) => (
          <span key={m.label} className={`${m.w} shrink-0 whitespace-nowrap leading-none`}>
            {m.label}
          </span>
        ))}
        <svg className="ml-auto mr-[6px]" width="8" height="8" viewBox="0 0 8 8">
          <path d="M1 1 L6 6 M7 2.5 V7 H2.5Z" stroke="#000" strokeWidth="1.2" />
        </svg>
      </nav>
      <div className="flex h-[34px] shrink-0 items-center border-b border-t border-[#a0a0a0] bg-[#f0f0f0] pb-[2px]">
        {toolbar.map((t, i) => (
          <div key={i} className={`${t.w} flex shrink-0 items-center justify-center`}>
            {t.icon}
          </div>
        ))}
      </div>
      <Figure />
      <div className="h-[2px] shrink-0 bg-[#d5e3f5]" />
    </section>
  );
}

export default function App() {
  return (
    <div className="flex h-[1080px] w-[1920px] overflow-hidden bg-[#dedede]">
      <section className="relative flex h-[1078px] w-[960px] flex-col border-l border-r border-t border-[#6d6f70] bg-[#212730]">
        <TitleBar />
        <div className="flex h-[1021px]">
          <LeftRail />
          <DocumentPage />
          <RightRail />
        </div>
        <div className="absolute left-[54px] top-[52px] flex size-[25px] items-center justify-center rounded-full bg-[#16181f]">
          <svg width="7" height="7" viewBox="0 0 7 7" fill="none" stroke="#3fae66" strokeWidth="1.5">
            <path d="M1 7 V1 H7" />
          </svg>
        </div>
      </section>
      <MatlabWindow />
    </div>
  );
}
